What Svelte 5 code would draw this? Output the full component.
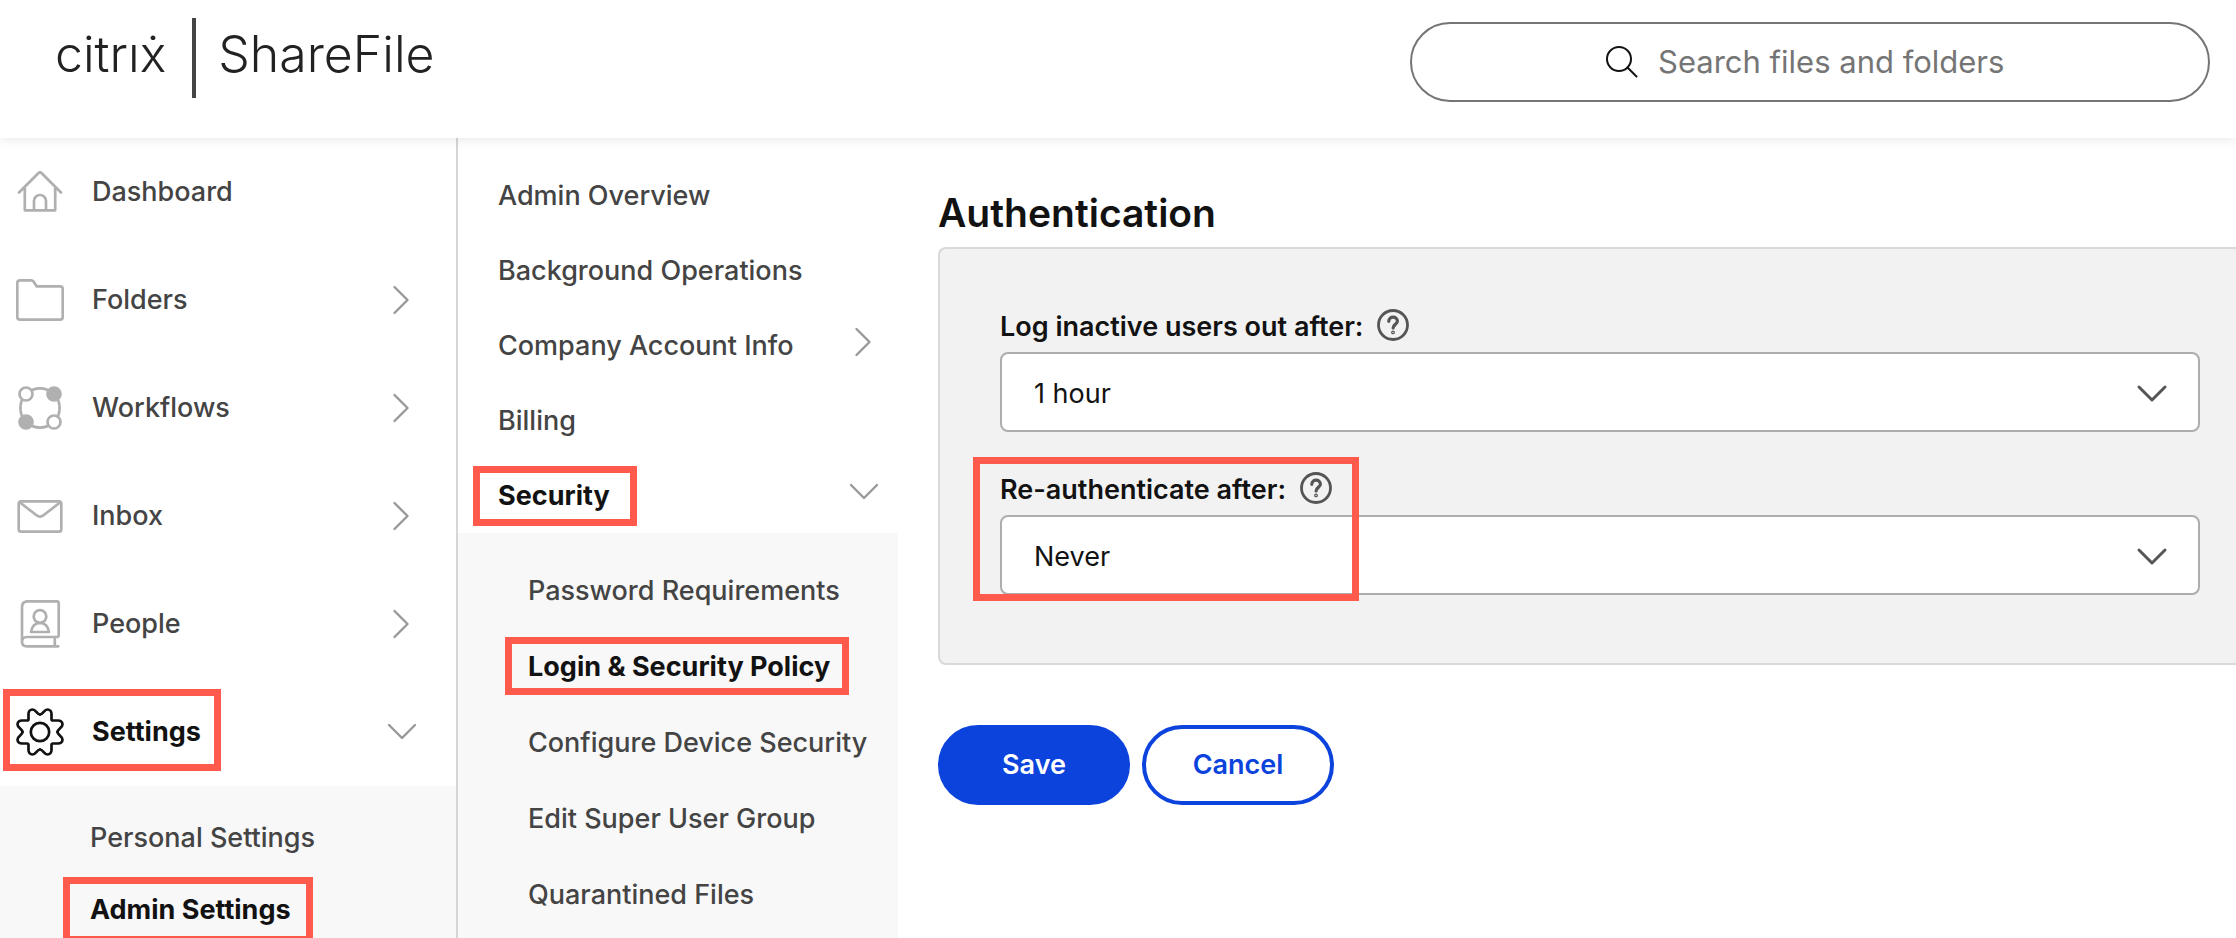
<script lang="ts">
  const nav = [
    { id: 'dashboard', label: 'Dashboard', chevron: '' },
    { id: 'folders', label: 'Folders', chevron: 'right' },
    { id: 'workflows', label: 'Workflows', chevron: 'right' },
    { id: 'inbox', label: 'Inbox', chevron: 'right' },
    { id: 'people', label: 'People', chevron: 'right' },
    { id: 'settings', label: 'Settings', chevron: 'down' }
  ];

  const settingsLinks = [
    { label: 'Personal Settings', active: false },
    { label: 'Admin Settings', active: true }
  ];

  const adminLinks = [
    { label: 'Admin Overview', chevron: '', active: false },
    { label: 'Background Operations', chevron: '', active: false },
    { label: 'Company Account Info', chevron: 'right', active: false },
    { label: 'Billing', chevron: '', active: false },
    { label: 'Security', chevron: 'down', active: true }
  ];

  const securityLinks = [
    { label: 'Password Requirements', active: false },
    { label: 'Login & Security Policy', active: true },
    { label: 'Configure Device Security', active: false },
    { label: 'Edit Super User Group', active: false },
    { label: 'Quarantined Files', active: false }
  ];

  let inactivity = $state('1 hour');
  let reauth = $state('Never');
</script>

{#snippet chevronIcon(direction: string)}
  <svg class="chevron" viewBox="0 0 32 32" aria-hidden="true">
    {#if direction === 'right'}
      <path d="M8.5 3l13 13-13 13" />
    {:else}
      <path d="M3 9l13 13 13-13" />
    {/if}
  </svg>
{/snippet}

{#snippet navIcon(id: string)}
  <svg class="icon" viewBox="0 0 48 48" aria-hidden="true">
    {#if id === 'dashboard'}
      <path d="M3 24.5 22.3 5.2q1.7-1.6 3.4 0L45 24.5M8.8 19v23.3h30.4V19M18 42.3V33a6 6 0 0 1 12 0v9.3" />
    {:else if id === 'folders'}
      <path d="M4.3 4.3H15q1.6 0 2.6 1.3l3 4.7H44q2.7 0 2.7 2.7v28q0 2.7-2.7 2.7H4.3q-3 0-3-2.7V7q0-2.7 3-2.7z" />
    {:else if id === 'workflows'}
      <path d="M17 5.6q7-2.4 14 0M17 42.4q7 2.4 14 0M5.6 17q-2.4 7 0 14M42.4 17q2.4 7 0 14" />
      <circle cx="10" cy="10" r="6.5" />
      <circle cx="38" cy="38" r="6.5" />
      <circle class="solid" cx="38" cy="10" r="6.5" />
      <circle class="solid" cx="10" cy="38" r="6.5" />
    {:else if id === 'inbox'}
      <rect x="2.7" y="9.3" width="42.6" height="30.4" rx="2.5" />
      <path d="M4 10.5l16.5 12.8q3.5 2.7 7 0L44 10.5" />
    {:else if id === 'people'}
      <path d="M6 42V7q0-5.7 6-5.7h29q1.7 0 1.7 1.7v32q0 2-2 2H11q-5 0-5 4.7 0 4.6 5 4.6h31.3M38.8 37v9.3" />
      <circle cx="24" cy="16.5" r="6.3" />
      <path d="M15 32q1.5-9 9-9t9 9z" />
    {:else}
      {#each [0, 90, 180, 270] as turn}
        <path
          transform={`rotate(${turn} 24 24)`}
          d="M24 6.5c-3 0-4-5-7.5-5-2.5 0-4 2-4 4.5v5q0 1.5-1.5 1.5h-5c-2.5 0-4.5 1.5-4.5 4 0 3.5 5 4.5 5 7.5"
        />
      {/each}
      <circle cx="24" cy="24" r="9.2" />
    {/if}
  </svg>
{/snippet}

{#snippet helpButton(topic: string)}
  <button class="help" type="button" aria-label={topic}>
    <svg viewBox="0 0 32 32" aria-hidden="true">
      <circle cx="16" cy="16" r="14.5" stroke-width="2.8" />
      <path d="M11.8 12.3c0-5.6 8.6-5.6 8.6 0 0 3-4.3 3.2-4.3 6.6" stroke-width="3.2" />
      <circle cx="16" cy="23.4" r="1.3" stroke-width="1.2" />
    </svg>
  </button>
{/snippet}

<div class="app">
  <header>
    <a class="brand" href="#home">
      <span class="citrix">citrıẋ</span>
      <span class="rule"></span>
      <span class="product">ShareFile</span>
    </a>
    <label class="search">
      <svg viewBox="0 0 32 32" aria-hidden="true">
        <circle cx="13" cy="13" r="12" />
        <path d="M21.5 21.5l9 9" />
      </svg>
      <input type="text" placeholder="Search files and folders" aria-label="Search files and folders" />
    </label>
  </header>

  <div class="body">
    <nav class="primary" aria-label="Main">
      {#each nav as item}
        <a class="nav-row" class:active={item.id === 'settings'} href={`#${item.id}`}>
          {@render navIcon(item.id)}
          <span class="text">{item.label}</span>
          {#if item.chevron}{@render chevronIcon(item.chevron)}{/if}
          {#if item.id === 'settings'}<span class="mark mark-settings"></span>{/if}
        </a>
      {/each}
      <div class="sub">
        {#each settingsLinks as link}
          <a class="sub-row" class:active={link.active} href="#settings">
            <span class="anchor">
              {link.label}
              {#if link.active}<span class="mark mark-admin"></span>{/if}
            </span>
          </a>
        {/each}
      </div>
    </nav>

    <nav class="secondary" aria-label="Admin settings">
      {#each adminLinks as link}
        <a class="admin-row" class:active={link.active} href="#admin">
          <span class="text anchor">
            {link.label}
            {#if link.active}<span class="mark mark-security"></span>{/if}
          </span>
          {#if link.chevron}{@render chevronIcon(link.chevron)}{/if}
        </a>
      {/each}
      <div class="sub">
        {#each securityLinks as link}
          <a class="sub-row" class:active={link.active} href="#security">
            <span class="anchor">
              {link.label}
              {#if link.active}<span class="mark mark-login"></span>{/if}
            </span>
          </a>
        {/each}
      </div>
    </nav>

    <main>
      <h1>Authentication</h1>
      <section class="panel">
        <div class="field">
          <div class="field-label">
            <label for="inactivity">Log inactive users out after:</label>
            {@render helpButton('About inactivity logout')}
          </div>
          <div class="select">
            <select id="inactivity" bind:value={inactivity}>
              <option>1 hour</option>
            </select>
            {@render chevronIcon('down')}
          </div>
        </div>
        <div class="field">
          <div class="field-label">
            <label for="reauth">Re-authenticate after:</label>
            {@render helpButton('About re-authentication')}
          </div>
          <div class="select">
            <select id="reauth" bind:value={reauth}>
              <option>Never</option>
            </select>
            {@render chevronIcon('down')}
          </div>
          <span class="mark mark-reauth"></span>
        </div>
      </section>
      <div class="actions">
        <button class="save" type="button">Save</button>
        <button class="cancel" type="button">Cancel</button>
      </div>
    </main>
  </div>
</div>

<style>
  :global(body) {
    margin: 0;
    background: #fff;
  }

  .app,
  .app * {
    box-sizing: border-box;
  }

  .app {
    display: flex;
    flex-direction: column;
    height: 100vh;
    overflow: hidden;
    font-family: Inter, "Liberation Sans", sans-serif;
    font-size: 27px;
    line-height: 36px;
    color: #444;
  }

  a {
    color: inherit;
    text-decoration: none;
  }

  svg {
    flex: none;
    fill: none;
    stroke: currentColor;
    stroke-linecap: round;
    stroke-linejoin: round;
  }

  header {
    position: relative;
    z-index: 1;
    display: flex;
    flex: none;
    align-items: flex-start;
    justify-content: space-between;
    padding: 18px 26px 36px 55px;
    background: #fff;
    box-shadow: 0 0 12px rgba(0, 0, 0, 0.12);
  }

  .brand {
    display: flex;
    align-items: center;
    color: #222;
    font-size: 50px;
    font-weight: 350;
    line-height: 72px;
  }

  .citrix,
  .product {
    padding-bottom: 8px;
  }

  .rule {
    width: 4px;
    height: 80px;
    margin: 0 22px 0 26px;
    background: #444;
  }

  .search {
    display: flex;
    align-items: center;
    justify-content: center;
    gap: 20px;
    width: 40%;
    max-width: 800px;
    height: 80px;
    margin-top: 4px;
    border: 2px solid #757575;
    border-radius: 40px;
  }

  .search svg {
    width: 32px;
    height: 32px;
    color: #121212;
    stroke-width: 2;
  }

  .search input {
    width: 356px;
    padding: 0;
    border: 0;
    outline: 0;
    background: none;
    font: inherit;
    font-size: 31px;
  }

  .search input::placeholder {
    color: #757575;
    opacity: 1;
  }

  .body {
    display: flex;
    flex: 1;
    min-height: 0;
  }

  nav {
    display: flex;
    flex: none;
    flex-direction: column;
    font-weight: 500;
  }

  .primary {
    width: 458px;
    border-right: 2px solid #d6d6d6;
  }

  .secondary {
    width: 440px;
    padding-top: 20px;
  }

  .nav-row {
    position: relative;
    display: flex;
    flex: none;
    align-items: center;
    height: 108px;
    padding: 0 38px 0 16px;
  }

  .icon {
    width: 48px;
    height: 48px;
    margin-right: 28px;
    color: #b0b0b0;
    stroke-width: 2.7;
  }

  .solid {
    fill: currentColor;
  }

  .text {
    margin-right: auto;
  }

  .chevron {
    width: 32px;
    height: 32px;
    color: #999;
    stroke-width: 2.4;
  }

  .active {
    color: #121212;
    font-weight: 650;
  }

  .active .icon {
    color: #121212;
  }

  .sub {
    flex: 1 0 auto;
    background: #f8f8f8;
  }

  .primary .sub {
    padding-top: 16px;
  }

  .secondary .sub {
    padding-top: 20px;
  }

  .sub-row {
    display: flex;
    align-items: center;
    height: 72px;
    padding-left: 90px;
  }

  .secondary .sub-row {
    height: 76px;
    padding-left: 70px;
  }

  .admin-row {
    display: flex;
    flex: none;
    align-items: center;
    height: 75px;
    padding: 0 18px 0 40px;
  }

  .admin-row .chevron {
    margin-bottom: 8px;
  }

  .anchor {
    position: relative;
    white-space: nowrap;
  }

  .mark {
    position: absolute;
    border: 7px solid #ff5a4c;
    pointer-events: none;
  }

  .mark-settings {
    top: 11px;
    left: 3px;
    width: 218px;
    height: 82px;
  }

  .mark-admin {
    top: -15px;
    left: -27px;
    width: 250px;
    height: 66px;
  }

  .mark-security {
    top: -12px;
    left: -25px;
    width: 164px;
    height: 60px;
  }

  .mark-login {
    top: -12px;
    left: -23px;
    width: 344px;
    height: 58px;
  }

  .mark-reauth {
    top: -13px;
    left: -27px;
    width: 386px;
    height: 144px;
  }

  main {
    flex: 1;
    min-width: 0;
    padding: 51px 0 0 40px;
    color: #121212;
  }

  h1 {
    margin: 0 0 10px;
    font-size: 39px;
    font-weight: 600;
    line-height: 48px;
  }

  .panel {
    display: flex;
    flex-direction: column;
    gap: 38px;
    padding: 58px 36px 68px 60px;
    border: 2px solid #d9d9d9;
    border-right: 0;
    border-radius: 8px 0 0 8px;
    background: #f2f2f2;
  }

  .field {
    position: relative;
  }

  .field-label {
    display: flex;
    align-items: center;
    gap: 14px;
    height: 40px;
    margin-bottom: 5px;
    font-weight: 600;
  }

  .help {
    display: flex;
    margin: 0 0 4px;
    padding: 0;
    border: 0;
    background: none;
    color: #555;
  }

  .help svg {
    width: 32px;
    height: 32px;
  }

  .select {
    position: relative;
  }

  select {
    display: block;
    width: 100%;
    height: 80px;
    padding: 4px 96px 0 32px;
    border: 2px solid #adadad;
    border-radius: 8px;
    appearance: none;
    background: #fff;
    color: #121212;
    font: inherit;
  }

  .select .chevron {
    position: absolute;
    top: 26px;
    right: 32px;
    color: #555;
    stroke-width: 3;
    pointer-events: none;
  }

  .actions {
    display: flex;
    gap: 12px;
    margin-top: 60px;
  }

  .actions button {
    width: 192px;
    height: 80px;
    border: 4px solid #0b43dc;
    border-radius: 40px;
    font: inherit;
    font-weight: 600;
  }

  .save {
    background: #0b43dc;
    color: #fff;
  }

  .cancel {
    background: #fff;
    color: #0b43dc;
  }
</style>
